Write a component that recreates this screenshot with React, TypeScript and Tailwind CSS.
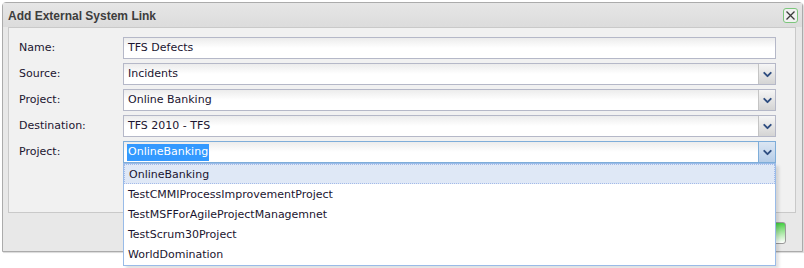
import { ChevronDown } from "lucide-react";

const ROWS = [
  { label: "Name:", value: "TFS Defects", combo: false },
  { label: "Source:", value: "Incidents", combo: true },
  { label: "Project:", value: "Online Banking", combo: true },
  { label: "Destination:", value: "TFS 2010 - TFS", combo: true },
];

const OPTIONS = [
  "OnlineBanking",
  "TestCMMIProcessImprovementProject",
  "TestMSFForAgileProjectManagemnet",
  "TestScrum30Project",
  "WorldDomination",
];

const font = "font-['DejaVu_Sans',sans-serif]";

const Field = ({ value, combo }: { value: string; combo: boolean }) => (
  <div className="flex h-[22px] w-[653px] border border-[#b5b8c8] bg-white">
    <div className="flex flex-1 items-center bg-gradient-to-b from-[#ececec] via-white to-white pt-[1px] pl-[4px] text-[11px] text-[#1b1530]">
      {value}
    </div>
    {combo && (
      <div className="flex w-[17px] items-center justify-center border-l border-[#c4c4c4] bg-gradient-to-b from-[#f6f6f6] to-[#d4d4d4]">
        <ChevronDown size={13} strokeWidth={3.5} className="text-[#2e4d80]" />
      </div>
    )}
  </div>
);

export default function App() {
  return (
    <div className={`h-[268px] w-[804px] bg-white pt-[2px] pl-[2px] ${font}`}>
      <div className="relative flex h-[250px] w-[801px] flex-col rounded-t-[4px] border border-[#ababab] bg-[#e8e8e8] shadow-[1px_1px_1px_rgba(0,0,0,0.15)]">
        {/* title bar */}
        <div className="flex h-[24px] items-center justify-between bg-gradient-to-b from-[#e6e6e6] to-[#dcdcdc] pt-[1px] pl-[5px] pr-[4px]">
          <span className="font-['Liberation_Sans',sans-serif] text-[12px] font-bold text-[#3d3d3d]">
            Add External System Link
          </span>
          <button className="flex h-[15px] w-[15px] items-center justify-center rounded-[3px] border border-[#7cc67c] bg-[#f1f1f1]">
            <svg width="11" height="11" viewBox="0 0 11 11">
              <path d="M1.5 1.5 L9.5 9.5 M9.5 1.5 L1.5 9.5" stroke="#3a3a3a" strokeWidth="1.3" />
            </svg>
          </button>
        </div>

        {/* form panel */}
        <div className="relative ml-[5px] h-[186px] w-[788px] border border-[#c9c9c9] bg-[#f1f1f1] pt-[9px] pl-[10px]">
          <div className="flex flex-col gap-[4px]">
            {ROWS.map((row) => (
              <div key={row.label + row.value} className="flex items-center">
                <span className="w-[104px] pt-[1px] text-[11px] text-[#1b1530]">{row.label}</span>
                <Field value={row.value} combo={row.combo} />
              </div>
            ))}

            <div className="flex items-center">
              <span className="w-[104px] pt-[1px] text-[11px] text-[#1b1530]">Project:</span>
              <div className="relative">
                <div className="flex h-[22px] w-[653px] border border-[#7eadd9] bg-white">
                  <div className="flex flex-1 items-center bg-gradient-to-b from-[#ececec] via-white to-white pt-[1px] pl-[3px] text-[11px]">
                    <span className="bg-[#3399ff] px-[1px] text-white">OnlineBanking</span>
                  </div>
                  <div className="flex w-[17px] items-center justify-center border-l border-[#7eadd9] bg-gradient-to-b from-[#dbe6f3] to-[#b6cde8]">
                    <ChevronDown size={13} strokeWidth={3.5} className="text-[#2e4d80]" />
                  </div>
                </div>

                {/* open list */}
                <div className="absolute top-[22px] left-0 z-10 w-[653px] border border-[#99bbe8] bg-white pb-[1px] shadow-[3px_3px_3px_rgba(0,0,0,0.12)]">
                  {OPTIONS.map((opt, i) => (
                    <div
                      key={opt}
                      className={`flex h-[20px] items-center pt-[2px] pl-[4px] text-[11px] text-[#1b1530] ${
                        i === 0 ? "border border-dotted border-[#a3bae9] bg-[#dfe8f6] pl-[3px]" : ""
                      }`}
                    >
                      {opt}
                    </div>
                  ))}
                </div>
              </div>
            </div>
          </div>
        </div>

        {/* footer */}
        <div className="flex justify-end pt-[9px] pr-[16px]">
          <button className="h-[22px] w-[64px] rounded-[3px] border border-[#9a9a9a] bg-gradient-to-b from-[#3fcf3f] to-white" />
        </div>
      </div>
    </div>
  );
}
